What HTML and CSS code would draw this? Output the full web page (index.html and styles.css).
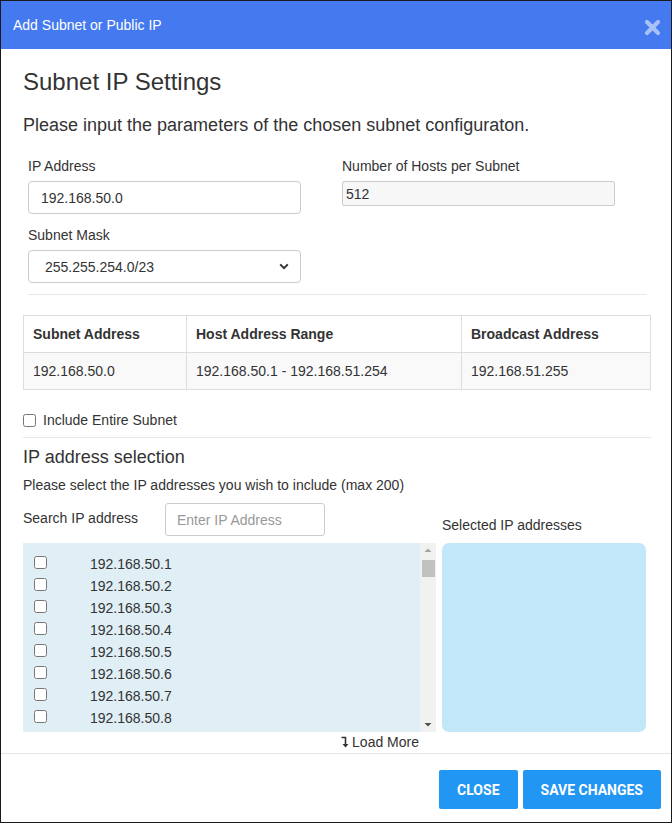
FILE: index.html
```html
<!DOCTYPE html>
<html>
<head>
<meta charset="utf-8">
<link rel="stylesheet" href="styles.css">
</head>
<body>
<div class="modal">
  <div class="modal-header">
    <span class="modal-title">Add Subnet or Public IP</span>
    <svg class="close-x" width="17" height="17" viewBox="0 0 17 17"><path d="M3 3 L14 14 M14 3 L3 14" stroke="#a8c2f8" stroke-width="4.2" stroke-linecap="round"/></svg>
  </div>
  <div class="modal-body">
    <h4 class="title">Subnet IP Settings</h4>
    <p class="subtitle">Please input the parameters of the chosen subnet configuraton.</p>
    <div class="form-grid">
      <div class="col">
        <label class="lbl">IP Address</label>
        <input class="field" type="text" value="192.168.50.0">
        <label class="lbl lbl-2">Subnet Mask</label>
        <div class="select">
          <span>255.255.254.0/23</span>
          <svg width="10" height="7" viewBox="0 0 10 7"><path d="M1.2 1.4 L5 5.2 L8.8 1.4" stroke="#333" stroke-width="2" fill="none"/></svg>
        </div>
      </div>
      <div class="col">
        <label class="lbl">Number of Hosts per Subnet</label>
        <input class="field field-ro" type="text" value="512" readonly>
      </div>
    </div>
    <div class="hr hr-inset"></div>
    <table class="tbl">
      <thead>
        <tr><th class="c1">Subnet Address</th><th class="c2">Host Address Range</th><th>Broadcast Address</th></tr>
      </thead>
      <tbody>
        <tr><td>192.168.50.0</td><td>192.168.50.1 - 192.168.51.254</td><td>192.168.51.255</td></tr>
      </tbody>
    </table>
    <label class="check-row"><input type="checkbox" class="cb"> Include Entire Subnet</label>
    <div class="hr"></div>
    <h4 class="section-title">IP address selection</h4>
    <p class="hint">Please select the IP addresses you wish to include (max 200)</p>
    <div class="sel-grid">
      <div class="sel-left">
        <div class="search-row">
          <span class="search-lbl">Search IP address</span>
          <input class="search" type="text" placeholder="Enter IP Address">
        </div>
        <div class="list-box">
          <div class="list">
            <label class="item"><input type="checkbox" class="cb"><span>192.168.50.1</span></label>
            <label class="item"><input type="checkbox" class="cb"><span>192.168.50.2</span></label>
            <label class="item"><input type="checkbox" class="cb"><span>192.168.50.3</span></label>
            <label class="item"><input type="checkbox" class="cb"><span>192.168.50.4</span></label>
            <label class="item"><input type="checkbox" class="cb"><span>192.168.50.5</span></label>
            <label class="item"><input type="checkbox" class="cb"><span>192.168.50.6</span></label>
            <label class="item"><input type="checkbox" class="cb"><span>192.168.50.7</span></label>
            <label class="item"><input type="checkbox" class="cb"><span>192.168.50.8</span></label>
          </div>
          <div class="scrollbar">
            <svg class="arrow" width="16" height="14" viewBox="0 0 16 14"><path d="M4.5 9 L8 5.5 L11.5 9 Z" fill="#a3a3a3"/></svg>
            <div class="thumb"></div>
            <div class="track"></div>
            <svg class="arrow" width="16" height="14" viewBox="0 0 16 14"><path d="M4.5 5 L8 8.5 L11.5 5 Z" fill="#505050"/></svg>
          </div>
        </div>
        <div class="load-more">
          <svg width="8" height="12" viewBox="0 0 8 12"><path d="M0.5 1.5 H4.5 V9" stroke="#333" stroke-width="1.6" fill="none"/><path d="M1.5 8 L4.5 11.5 L7.5 8 Z" fill="#333"/></svg>
          <span>Load More</span>
        </div>
      </div>
      <div class="sel-right">
        <div class="sel-lbl">Selected IP addresses</div>
        <div class="selected-box"></div>
      </div>
    </div>
  </div>
  <div class="modal-footer">
    <button class="btn">CLOSE</button>
    <button class="btn">SAVE CHANGES</button>
  </div>
</div>
</body>
</html>
```
FILE: styles.css
```css
* { box-sizing: border-box; }
body { margin: 0; background: #fff; font-family: "Liberation Sans", Arial, sans-serif; color: #333; }
.modal { width: 672px; height: 823px; border: 1px solid #1a1a1a; display: flex; flex-direction: column; background: #fff; overflow: hidden; }
.modal-header { height: 48px; background: #4479f0; display: flex; align-items: center; justify-content: space-between; padding: 0 10px 0 12px; flex: none; }
.modal-title { color: #fff; font-size: 14px; line-height: 20px; }
.close-x { margin-top: 4px; }
.modal-body { flex: 1; padding: 0 20px 0 22px; }
.title { margin: 19px 0 0; font-size: 24px; line-height: 28px; font-weight: normal; }
.subtitle { margin: 18px 0 0; font-size: 18px; line-height: 22px; }
.form-grid { display: grid; grid-template-columns: 273px 273px; column-gap: 41px; margin-top: 20px; padding-left: 5px; }
.col { display: flex; flex-direction: column; }
.lbl { display: block; font-size: 14px; line-height: 20px; margin-bottom: 5px; }
.lbl-2 { margin-top: 11px; }
.field { height: 33px; width: 273px; border: 1px solid #ccc; border-radius: 4px; padding: 0 12px; font: 14px "Liberation Sans", Arial, sans-serif; color: #333; background: #fff; }
.field-ro { height: 25px; border-radius: 2px; background: #f7f7f7; padding: 0 3px; }
.select { height: 33px; width: 273px; border: 1px solid #ccc; border-radius: 4px; padding: 0 11px 0 16px; display: flex; align-items: center; justify-content: space-between; font-size: 14px; }
.hr { height: 1px; background: #e8e8e8; }
.hr-inset { margin: 11px 4px 0 5px; }
.tbl { width: 100%; border-collapse: collapse; margin-top: 20px; font-size: 14px; }
.tbl th, .tbl td { border: 1px solid #ddd; padding: 8px 9px; line-height: 20px; text-align: left; }
.tbl th { font-weight: bold; }
.tbl .c1 { width: 163px; }
.tbl .c2 { width: 275px; }
.tbl tbody td { background: #f9f9f9; }
.check-row { display: flex; align-items: center; gap: 7px; margin-top: 20px; font-size: 14px; line-height: 20px; }
.cb { margin: 0; width: 13px; height: 13px; }
.check-row + .hr { margin-top: 7px; }
.section-title { margin: 8px 0 0; font-size: 18px; line-height: 22px; font-weight: normal; }
.hint { margin: 7px 0 0; font-size: 14px; line-height: 20px; }
.sel-grid { display: flex; gap: 6px; margin-top: 8px; }
.sel-left { width: 413px; }
.search-row { display: flex; align-items: center; height: 33px; }
.search-lbl { width: 142px; font-size: 14px; margin-top: -3px; }
.search { width: 160px; height: 33px; border: 1px solid #ccc; border-radius: 3px; padding: 0 11px; font: 14px "Liberation Sans", Arial, sans-serif; color: #333; }
.search::placeholder { color: #999; }
.list-box { margin-top: 7px; height: 189px; background: #e0eef5; display: flex; }
.list { flex: 1; padding: 10px 0 0 11px; }
.item { display: flex; align-items: center; height: 22px; font-size: 14px; }
.item .cb { margin-bottom: 4px; }
.item span { margin-left: 43px; }
.scrollbar { width: 16px; background: #f1f1f1; display: flex; flex-direction: column; align-items: center; }
.arrow { display: block; flex: none; }
.thumb { width: 13px; height: 17px; background: #c1c1c1; margin-top: 3px; }
.track { flex: 1; }
.load-more { display: flex; align-items: center; justify-content: flex-end; gap: 3px; height: 20px; padding-right: 17px; font-size: 14px; }
.sel-right { width: 204px; display: flex; flex-direction: column; }
.sel-lbl { height: 33px; display: flex; align-items: flex-end; font-size: 14px; line-height: 20px; padding-bottom: 1px; }
.selected-box { margin-top: 7px; height: 189px; background: #c2e7f9; border-radius: 7px; }
.modal-footer { flex: none; border-top: 1px solid #e5e5e5; padding: 16px 10px 13px; display: flex; justify-content: flex-end; gap: 5px; }
.btn { height: 39px; border: 0; border-radius: 2px; background: #2196f3; color: #fff; font: bold 14px Roboto, "Liberation Sans", sans-serif; padding: 0 18px; letter-spacing: 0; }
```
